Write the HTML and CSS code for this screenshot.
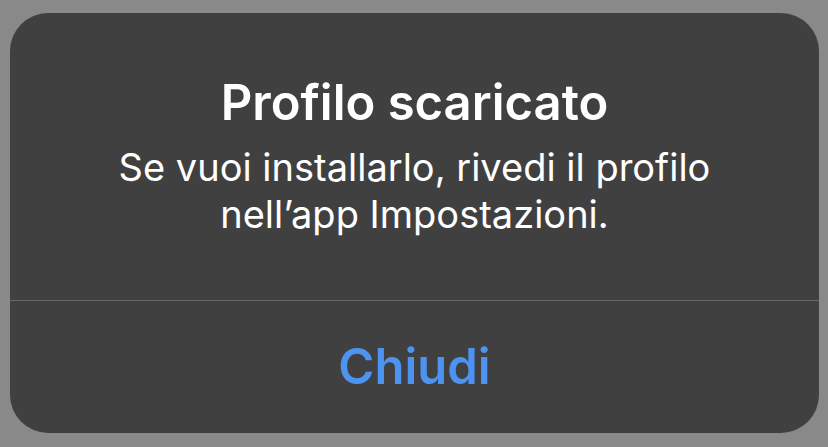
FILE: index.html
```html
<!DOCTYPE html>
<html>
<head>
<meta charset="utf-8">
<link rel="stylesheet" href="styles.css">
</head>
<body>
<div class="alert">
  <div class="content">
    <h1 class="title">Profilo scaricato</h1>
    <p class="message">Se vuoi installarlo, rivedi il profilo<br>nell’app Impostazioni.</p>
  </div>
  <div class="actions">
    <button class="action">Chiudi</button>
  </div>
</div>
</body>
</html>
```
FILE: styles.css
```css
html, body {
  margin: 0;
  padding: 0;
}
body {
  width: 828px;
  height: 447px;
  background: #898989;
  padding: 13px 9px 14px 10px;
  box-sizing: border-box;
  font-family: Inter, "Noto Sans", sans-serif;
}
.alert {
  width: 809px;
  height: 420px;
  background: #404040;
  border-radius: 38px;
  display: flex;
  flex-direction: column;
  overflow: hidden;
}
.content {
  height: 288px;
  box-sizing: border-box;
  padding-top: 62px;
  text-align: center;
  color: #ffffff;
  border-bottom: 1px solid #6a6a6a;
}
.title {
  margin: 0;
  font-size: 49px;
  line-height: 56px;
  font-weight: 600;
}
.message {
  margin: 13px 0 0;
  font-size: 38px;
  line-height: 47px;
  font-weight: 400;
}
.actions {
  flex: 1;
  display: flex;
  align-items: center;
  justify-content: center;
}
.action {
  background: none;
  border: 0;
  padding: 0;
  font-family: inherit;
  font-size: 49px;
  line-height: 56px;
  font-weight: 600;
  color: #4d93f1;
}
```
